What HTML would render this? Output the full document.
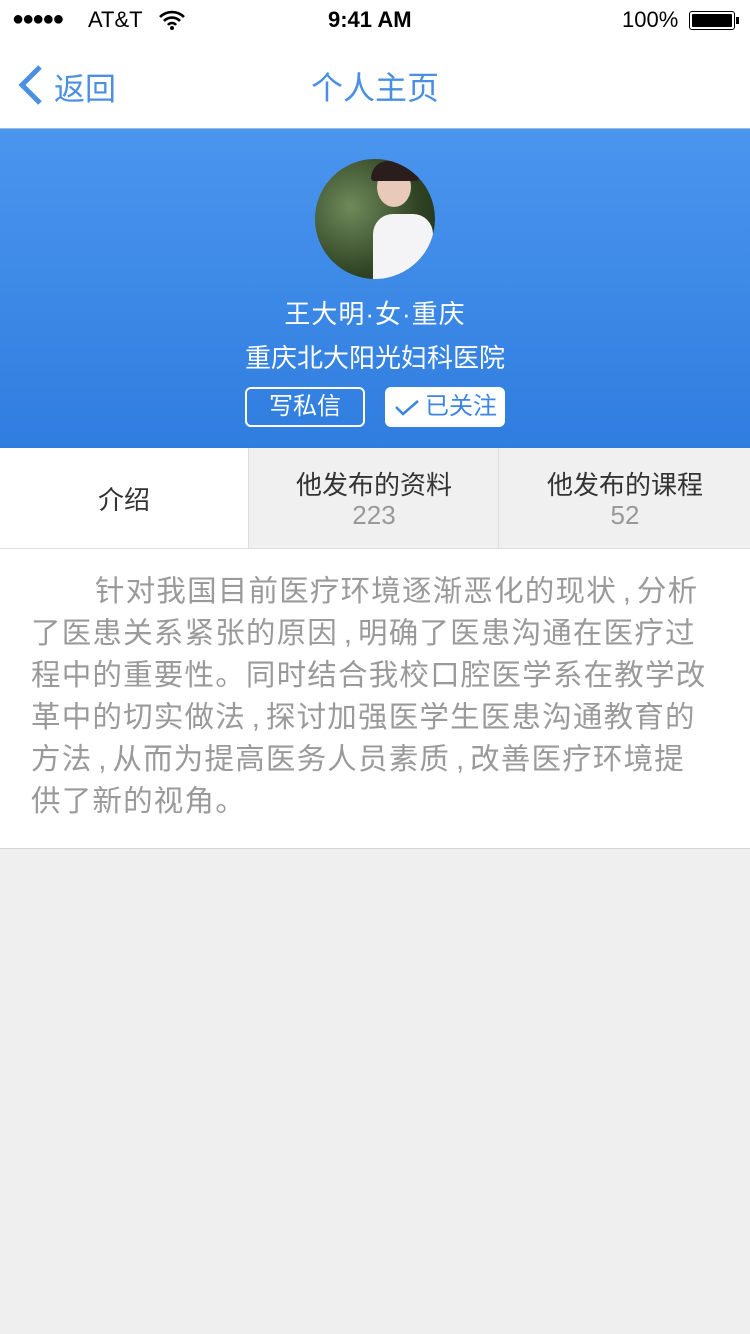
<!DOCTYPE html>
<html><head><meta charset="utf-8"><style>
*{margin:0;padding:0;box-sizing:border-box}
body{width:750px;height:1334px;background:#efefef;font-family:"Liberation Sans","Noto Sans CJK SC",sans-serif;position:relative;overflow:hidden}
.abs{position:absolute}
.status{top:0;left:0;width:750px;height:40px;background:#fff;font-size:22px;color:#000}
.nav{top:40px;left:0;width:750px;height:89px;background:#fff;border-bottom:1px solid #9bb9dd}
.hero{top:129px;left:0;width:750px;height:319px;background:linear-gradient(#4a95ee,#2f7ddf)}
.tabs{top:448px;left:0;width:750px;height:101px;background:#f0f0f0;border-bottom:1px solid #ddd}
.tab{position:absolute;top:0;height:100px;text-align:center;font-size:26px;color:#333}
.body{top:549px;left:0;width:750px;height:300px;background:#fff;border-bottom:1px solid #d6d6d6}
.txt{position:absolute;left:31px;top:22px;font-size:29.5px;line-height:42px;color:#9a9a9a;white-space:nowrap;letter-spacing:1.2px}
.c{display:inline-block;width:20px;text-align:center;letter-spacing:0}
</style></head><body>
<div class="abs status">
 <div class="abs" style="left:12px;top:8px;font-size:20px;letter-spacing:-2px">●●●●●</div>
 <div class="abs" style="left:88px;top:7px">AT&amp;T</div>
 <svg class="abs" style="left:158px;top:10px" width="28" height="20" viewBox="0 0 28 20"><path d="M2 7a17 17 0 0 1 24 0M6 11a11 11 0 0 1 16 0M10 15a5 5 0 0 1 8 0" stroke="#000" stroke-width="2.6" fill="none"/><circle cx="14" cy="18" r="2" fill="#000"/></svg>
 <div class="abs" style="left:328px;top:7px;font-weight:bold">9:41 AM</div>
 <div class="abs" style="left:622px;top:7px">100%</div>
 <div class="abs" style="left:689px;top:11px;width:46px;height:19px;border:1.5px solid #000;border-radius:3px;padding:2px"><div style="width:100%;height:100%;background:#000;border-radius:1px"></div></div>
 <div class="abs" style="left:736px;top:17px;width:3px;height:7px;background:#000"></div>
</div>
<div class="abs nav">
 <svg class="abs" style="left:16px;top:24px" width="28" height="42" viewBox="0 0 28 42"><path d="M24 3L6 21l18 18" stroke="#4a8fe2" stroke-width="5" fill="none"/></svg>
 <div class="abs" style="left:54px;top:24px;font-size:31px;color:#4a8fe2">返回</div>
 <div class="abs" style="left:0;width:750px;text-align:center;top:23px;font-size:32px;color:#4a8fe2">个人主页</div>
</div>
<div class="abs hero">
 <div class="abs" style="left:315px;top:30px;width:120px;height:120px;border-radius:50%;background:radial-gradient(circle at 30% 40%,#6f8a5a,#2f4424 60%,#1f2f1a);overflow:hidden">
  <div class="abs" style="left:58px;top:55px;width:60px;height:70px;background:#f4f4f6;border-radius:20px 20px 0 0"></div>
  <div class="abs" style="left:62px;top:8px;width:34px;height:40px;background:#e9c9b9;border-radius:50%"></div>
  <div class="abs" style="left:56px;top:2px;width:48px;height:20px;background:#2a1e1c;border-radius:24px 24px 4px 4px"></div>
 </div>
 <div class="abs" style="left:0;width:750px;text-align:center;top:165px;font-size:26px;color:#fff;letter-spacing:1px">王大明·女·重庆</div>
 <div class="abs" style="left:0;width:750px;text-align:center;top:209px;font-size:26px;color:#fff">重庆北大阳光妇科医院</div>
 <div class="abs" style="left:245px;top:258px;width:120px;height:40px;border:2px solid #fff;border-radius:6px;color:#fff;font-size:24px;text-align:center;line-height:36px">写私信</div>
 <div class="abs" style="left:385px;top:258px;width:120px;height:40px;background:#fff;border-radius:6px;color:#3b86e4;font-size:24px;line-height:40px;padding-left:40px">已关注</div>
 <svg class="abs" style="left:394px;top:270px" width="26" height="18" viewBox="0 0 26 18"><path d="M2 8l7 7L24 2" stroke="#3b86e4" stroke-width="2.5" fill="none"/></svg>
</div>
<div class="abs tabs">
 <div class="tab" style="left:0;width:249px;background:#fff;border-right:1px solid #ddd;line-height:104px">介绍</div>
 <div class="tab" style="left:250px;width:249px;border-right:1px solid #ddd;padding-top:22px;line-height:30px">他发布的资料<br><span style="color:#999">223</span></div>
 <div class="tab" style="left:500px;width:250px;padding-top:22px;line-height:30px">他发布的课程<br><span style="color:#999">52</span></div>
</div>
<div class="abs body"><div class="txt"><span style="padding-left:64px"></span>针对我国目前医疗环境逐渐恶化的现状<span class="c">,</span>分析<br>了医患关系紧张的原因<span class="c">,</span>明确了医患沟通在医疗过<br>程中的重要性。同时结合我校口腔医学系在教学改<br>革中的切实做法<span class="c">,</span>探讨加强医学生医患沟通教育的<br>方法<span class="c">,</span>从而为提高医务人员素质<span class="c">,</span>改善医疗环境提<br>供了新的视角。</div></div>
</body></html>
